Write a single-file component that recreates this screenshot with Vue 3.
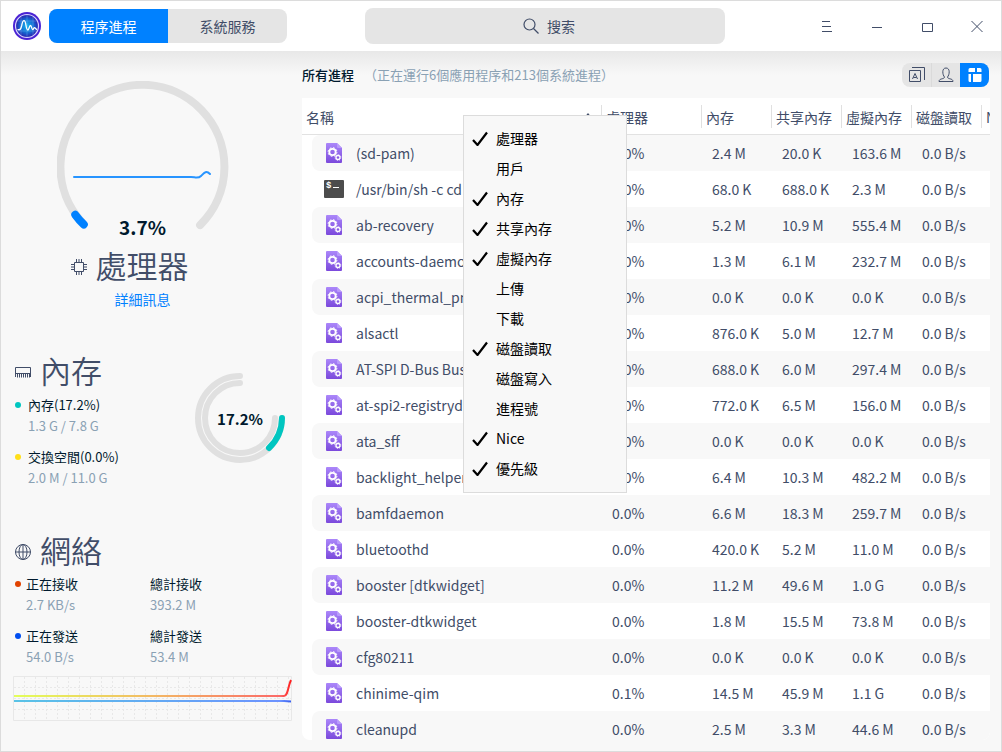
<script setup>
const rows = [
  ['(sd-pam)', '0.0%', '2.4 M', '20.0 K', '163.6 M'],
  ['/usr/bin/sh -c cd', '0.0%', '68.0 K', '688.0 K', '2.3 M'],
  ['ab-recovery', '0.0%', '5.2 M', '10.9 M', '555.4 M'],
  ['accounts-daemon', '0.0%', '1.3 M', '6.1 M', '232.7 M'],
  ['acpi_thermal_pm', '0.0%', '0.0 K', '0.0 K', '0.0 K'],
  ['alsactl', '0.0%', '876.0 K', '5.0 M', '12.7 M'],
  ['AT-SPI D-Bus Bus', '0.0%', '688.0 K', '6.0 M', '297.4 M'],
  ['at-spi2-registryd', '0.0%', '772.0 K', '6.5 M', '156.0 M'],
  ['ata_sff', '0.0%', '0.0 K', '0.0 K', '0.0 K'],
  ['backlight_helper', '0.0%', '6.4 M', '10.3 M', '482.2 M'],
  ['bamfdaemon', '0.0%', '6.6 M', '18.3 M', '259.7 M'],
  ['bluetoothd', '0.0%', '420.0 K', '5.2 M', '11.0 M'],
  ['booster [dtkwidget]', '0.0%', '11.2 M', '49.6 M', '1.0 G'],
  ['booster-dtkwidget', '0.0%', '1.8 M', '15.5 M', '73.8 M'],
  ['cfg80211', '0.0%', '0.0 K', '0.0 K', '0.0 K'],
  ['chinime-qim', '0.1%', '14.5 M', '45.9 M', '1.1 G'],
  ['cleanupd', '0.0%', '2.5 M', '3.3 M', '44.6 M'],
]
const heads = ['處理器', '內存', '共享內存', '虛擬內存', '磁盤讀取', 'Nice']
const menu = [
  ['處理器', true], ['用戶', false], ['內存', true], ['共享內存', true],
  ['虛擬內存', true], ['上傳', false], ['下載', false], ['磁盤讀取', true],
  ['磁盤寫入', false], ['進程號', false], ['Nice', true], ['優先級', true],
]
</script>

<template>
  <div class="window">
    <header class="titlebar">
      <svg class="logo" viewBox="0 0 28 28" aria-hidden="true">
        <defs>
          <radialGradient id="lg"><stop offset="0" stop-color="#13b8ee" /><stop offset="0.6" stop-color="#1668d0" /><stop offset="1" stop-color="#2a1eac" /></radialGradient>
        </defs>
        <circle cx="14" cy="14" r="14" fill="#4a22d4" />
        <circle cx="14" cy="14" r="11.5" fill="url(#lg)" stroke="#d9d2ff" stroke-width="1.200" />
        <path d="M8 5v18M14 3v22M20 5v18M4 9h20M4 19h20" stroke="#8cc8ff" stroke-width=".5" opacity=".6" />
        <path d="M4.500 17.500c3 1 3.500-1 4.200-4 .6-3 1.200-4.800 2.300-4.800s1.600 2.300 2 4.800c.5 3 1 4.500 2 4.500s1.200-4.500 2.500-4.500 1 4 2.200 4 .8-1.800 1.800-1.800 1 1.800 2.500 1.800" fill="none" stroke="#fff" stroke-width="1.300" />
      </svg>
      <nav class="tabs">
        <button class="tab active">程序進程</button>
        <button class="tab">系統服務</button>
      </nav>
      <div class="searchzone">
        <label class="search">
          <svg width="16" height="16" viewBox="0 0 16 16" aria-hidden="true"><circle cx="6.500" cy="6.500" r="5.500" /><path d="M10.500 10.500l5 5" /></svg>
          <input type="text" placeholder="搜索" aria-label="搜索">
        </label>
      </div>
      <div class="winbtns">
        <button aria-label="選單"><svg viewBox="0 0 12 12"><path d="M1 1.500h8M1 6.500h9M1 11.500h10" /></svg></button>
        <button aria-label="最小化"><svg viewBox="0 0 12 12"><path d="M1 7.500h10" /></svg></button>
        <button aria-label="最大化"><svg viewBox="0 0 12 12"><path d="M1.500 3.500h10v8h-10z" /></svg></button>
        <button aria-label="關閉"><svg viewBox="0 0 12 12"><path d="M.5 1l11 11M11.500 1l-11 11" /></svg></button>
      </div>
    </header>

    <div class="body">
      <aside>
        <section class="cpu">
          <div class="gauge">
            <svg viewBox="0 0 172 150" aria-hidden="true">
              <path d="M24.900 141.100A82 82 0 1 1 143.100 144.100" class="track" />
              <path d="M18.300 133.800q4 5.500 8.500 9.700" class="value" />
              <path d="M17 96h117c4 0 7 2 10-1s5-6 9-2" class="spark" />
            </svg>
            <b>3.7%</b>
          </div>
          <h2><svg width="16" height="16" viewBox="0 0 16 16" aria-hidden="true"><path d="M3.500 3.500h9v9h-9zM5.500 0v3M8 0v3M10.500 0v3M5.500 13v3M8 13v3M10.500 13v3M0 5.500h3M0 8h3M0 10.500h3M13 5.500h3M13 8h3M13 10.500h3" /></svg>處理器</h2>
          <a href="#">詳細訊息</a>
        </section>

        <section class="mem">
          <div>
            <h2><svg width="16" height="16" viewBox="0 0 16 16" aria-hidden="true"><path d="M.5 13V3.500h15V13M1 9.500h14M2.500 10v3.500M4.500 10v3.500M6.500 10v3.500M8.500 10v3.500M10.500 10v3.500M12.500 10v3.500M14.500 10v3.500" /></svg>內存</h2>
            <dl>
              <dt class="teal">內存(17.2%)</dt><dd>1.3 G / 7.8 G</dd>
              <dt class="yellow">交換空間(0.0%)</dt><dd>2.0 M / 11.0 G</dd>
            </dl>
          </div>
          <div class="ring">
            <svg viewBox="0 0 90 90" aria-hidden="true">
              <path d="M45 3A42 42 0 1 0 87 45" />
              <path d="M45 10A35 35 0 1 0 80 45" />
              <path d="M87 45A42 42 0 0 1 74 75" class="used" />
            </svg>
            <b>17.2%</b>
          </div>
        </section>

        <section class="net">
          <h2><svg width="16" height="16" viewBox="0 0 16 16" aria-hidden="true"><circle cx="8" cy="8" r="7.500" /><ellipse cx="8" cy="8" rx="4" ry="7.500" /><path d="M8 .5v15M.5 8h15" /></svg>網絡</h2>
          <div class="netgrid">
            <dl>
              <dt class="red">正在接收</dt><dd>2.7 KB/s</dd>
              <dt class="blue">正在發送</dt><dd>54.0 B/s</dd>
            </dl>
            <dl>
              <dt>總計接收</dt><dd>393.2 M</dd>
              <dt>總計發送</dt><dd>53.4 M</dd>
            </dl>
          </div>
          <svg class="chart" viewBox="0 0 279 45" aria-hidden="true">
            <defs>
              <linearGradient id="rx" gradientUnits="userSpaceOnUse" x1="0" x2="279" y1="0" y2="0"><stop offset="0" stop-color="#e3ff5a" /><stop offset=".5" stop-color="#f3b964" /><stop offset=".96" stop-color="#fb6a68" /><stop offset="1" stop-color="#ff1515" /></linearGradient>
              <linearGradient id="tx" gradientUnits="userSpaceOnUse" x1="0" x2="279" y1="0" y2="0"><stop offset="0" stop-color="#59c3e6" /><stop offset=".96" stop-color="#6c92ff" /><stop offset="1" stop-color="#3058ee" /></linearGradient>
            </defs>
            <path d="M11.500 1v43M22.500 1v43M33.500 1v43M44.500 1v43M55.500 1v43M66.500 1v43M77.500 1v43M88.500 1v43M99.500 1v43M110.500 1v43M121.500 1v43M132.500 1v43M143.500 1v43M154.500 1v43M165.500 1v43M176.500 1v43M187.500 1v43M198.500 1v43M209.500 1v43M220.500 1v43M231.500 1v43M242.500 1v43M253.500 1v43M264.500 1v43M275.500 1v43M1 11.500h277M1 22.500h277M1 33.500h277" stroke="#e8e8e8" stroke-dasharray="2 2" fill="none" />
            <path d="M.5.5h278v44H.5z" fill="none" stroke="#e8e8e8" />
            <path d="M1 20h270c4 0 4-10 7-16" fill="none" stroke="url(#rx)" stroke-width="2" />
            <path d="M1 25h270l7 .5" fill="none" stroke="url(#tx)" stroke-width="2" />
          </svg>
        </section>
      </aside>

      <main>
        <div class="summary">
          <strong>所有進程</strong>
          <span>（正在運行6個應用程序和213個系統進程）</span>
          <div class="modes">
            <button aria-label="應用程序"><svg viewBox="0 0 16 16"><path d="M.5 3.500h11v11H.5zM3 .5h12.500V13" /><path d="M3.500 12L6 6.500 8.500 12M4.500 10.500h3" /></svg></button>
            <button aria-label="我的進程"><svg viewBox="0 0 16 16"><path d="M1 14.500c0-3.500 5.500-2 5.500-4.500C4.500 8 3.500 1 8 1s3.500 7 1.500 9c0 2.500 5.500 1 5.500 4.500z" /></svg></button>
            <button class="active" aria-label="所有進程"><svg viewBox="0 0 16 16"><path class="solid" d="M3 1h5v4H1.500V2.500A1.500 1.500 0 0 1 3 1zM10 1h3a1.500 1.500 0 0 1 1.500 1.500V5H10zM1.500 7H4v8H3a1.500 1.500 0 0 1-1.500-1.500zM6 7h8.500v6.500A1.500 1.500 0 0 1 13 15H6z" /></svg></button>
          </div>
        </div>
        <div class="tablewrap">
          <div class="scroller">
            <table>
              <colgroup><col class="c-name"><col class="c-cpu"><col v-for="n in 4" :key="n" class="c-num"><col class="c-num"></colgroup>
              <thead>
                <tr>
                  <th class="first">名稱<svg width="8" height="5" viewBox="0 0 8 5" aria-hidden="true"><path d="M0 5l4-5 4 5z" /></svg></th>
                  <th v-for="h in heads" :key="h">{{ h }}</th>
                </tr>
              </thead>
              <tbody>
                <tr v-for="(r, i) in rows" :key="r[0]">
                  <td class="name">
                    <div>
                      <svg v-if="i === 1" class="picon" viewBox="0 0 20 20" aria-hidden="true"><rect y="1" width="20" height="18" rx="1" fill="#4c4c4c" /><text x="2" y="9" fill="#fff" font-size="9" font-weight="bold" font-family="Liberation Mono, monospace">$</text><path d="M9 8.500h6" stroke="#fff" stroke-width="1.200" /></svg>
                      <svg v-else class="picon" viewBox="0 0 20 20" aria-hidden="true">
                        <defs><linearGradient id="pg" x2="0" y2="1"><stop offset="0" stop-color="#ab87fa" /><stop offset="1" stop-color="#7b49dc" /></linearGradient></defs>
                        <path d="M3 0h10l5 5v14a1 1 0 0 1-1 1H3a1 1 0 0 1-1-1V1a1 1 0 0 1 1-1z" fill="url(#pg)" /><path d="M13 0v4a1 1 0 0 0 1 1h4z" fill="#b99bfb" />
                        <g fill="none" stroke="#fff"><circle cx="8.500" cy="9" r="3.200" stroke-width="1.800" /><circle cx="8.500" cy="9" r="4.400" stroke-width="1" stroke-dasharray="1.700 1.750" /><circle cx="14" cy="14.500" r="2" stroke-width="1.300" /><circle cx="14" cy="14.500" r="2.900" stroke-width=".8" stroke-dasharray="1.100 1.180" /></g>
                      </svg>
                      {{ r[0] }}
                    </div>
                  </td>
                  <td v-for="c in 4" :key="c">{{ r[c] }}</td>
                  <td>0.0 B/s</td>
                  <td></td>
                </tr>
              </tbody>
            </table>
          </div>
          <div class="menu" role="menu">
            <button v-for="m in menu" :key="m[0]" role="menuitemcheckbox" :aria-checked="m[1]">
              <svg width="16" height="16" viewBox="0 0 16 16" aria-hidden="true"><path v-if="m[1]" d="M1 10l4.500 5L15 2.500" /></svg>{{ m[0] }}
            </button>
          </div>
        </div>
      </main>
    </div>
  </div>
</template>

<style>
body { background: #f8f8f8; }
</style>

<style scoped>
* { box-sizing: border-box; }
.window { height: 100vh; display: flex; flex-direction: column; border: 1px solid #dcdcdc; background: #f8f8f8; font: 14px/20px "Noto Sans CJK SC", "Noto Sans CJK TC", sans-serif; color: #414d68; overflow: hidden; }
button { font: inherit; color: inherit; border: 0; padding: 0; background: none; }
h2, dl, dd { margin: 0; }
svg { display: block; flex: none; }
.titlebar { flex: none; height: 50px; display: flex; align-items: center; padding-left: 12px; background: #fff; }
.logo { width: 28px; height: 28px; margin-right: 8px; }
.tabs { display: flex; width: 238px; height: 34px; border-radius: 8px; overflow: hidden; background: #e5e5e5; }
.tab { flex: 1; }
.tab.active { background: #0081ff; color: #fff; }
.searchzone { flex: 1; display: flex; justify-content: center; padding-left: 1px; }
.search { width: 360px; height: 36px; display: flex; align-items: center; justify-content: center; gap: 8px; padding-left: 8px; background: #e5e5e5; border-radius: 8px; }
.search svg { fill: none; stroke: #414d68; stroke-width: 1.2; }
.search input { width: 28px; border: 0; padding: 0; background: none; font: inherit; outline: 0; }
.search input::placeholder { color: #414d68; opacity: 1; }
.winbtns { display: flex; margin-right: -1px; }
.winbtns button { width: 50px; height: 50px; display: grid; place-items: center; }
.winbtns svg { width: 12px; height: 12px; fill: none; stroke: #414d68; stroke-width: 1; overflow: visible; }
.body { flex: 1; min-height: 0; display: flex; background: linear-gradient(#e8e8e8, #f8f8f8 24px); }
aside { flex: none; width: 301px; padding: 30px 10px 0 12px; }
h2 { display: flex; align-items: center; gap: 9px; font-size: 31px; line-height: 40px; font-weight: 350; }
h2 svg { margin-top: 4px; fill: none; stroke: #414d68; stroke-width: 1; }
.cpu { display: flex; flex-direction: column; align-items: center; padding-right: 20px; }
.cpu h2 { margin-right: 26px; }
.gauge { width: 172px; height: 164px; position: relative; }
.gauge path { fill: none; stroke-linecap: round; }
.track { stroke: #e0e0e0; stroke-width: 8; }
.value { stroke: #0081ff; stroke-width: 8; }
.gauge .spark { stroke: #2794ff; stroke-width: 2; }
.gauge b { position: absolute; left: 0; right: 0; top: 132px; text-align: center; font-size: 19px; line-height: 28px; color: #001a2e; }
.cpu a { color: #0081ff; text-decoration: none; margin-top: 4px; }
.mem { display: flex; justify-content: space-between; margin-top: 41px; }
.mem h2, .net h2 { padding-left: 2px; }
dl { font-size: 13px; }
dt { height: 20px; position: relative; color: #001a2e; }
dd { height: 20px; margin: 1px 0 11px; color: #8aa1b4; }
.mem dl { padding: 5px 0 0 15px; }
.teal::before, .yellow::before, .red::before, .blue::before { content: ""; position: absolute; left: -13px; top: 7px; width: 6px; height: 6px; border-radius: 50%; background: #00c6c0; }
.yellow::before { background: #ffdf19; }
.net .red::before, .net .blue::before { left: -11px; }
.red::before { background: #e14300; }
.blue::before { background: #004ef0; }
.ring { width: 90px; height: 90px; margin: 23px 7px 0 0; position: relative; }
.ring path { fill: none; stroke: #e0e0e0; stroke-width: 6; stroke-linecap: round; }
.ring .used { stroke: #00c6c0; }
.ring b { position: absolute; inset: 35px 0 auto; text-align: center; font-size: 15px; line-height: 22px; color: #001a2e; }
.net { margin-top: 31px; }
.netgrid { display: grid; grid-template-columns: 124px 1fr; padding: 4px 0 0 13px; }
.chart { width: 100%; margin-top: -2px; }
main { flex: 1; min-width: 0; display: flex; flex-direction: column; padding: 12px 11px 11px 0; }
.summary { display: flex; align-items: center; height: 24px; flex: none; font-size: 13px; }
.summary strong { font-weight: 500; color: #001a2e; }
.summary span { margin-left: 10px; color: #8aa1b4; }
.modes { display: flex; margin: 0 1px 0 auto; border-radius: 8px; overflow: hidden; background: #e5e5e5; }
.modes button { width: 29px; height: 24px; display: grid; place-items: center; }
.modes button + button { border-left: 1px solid #dadada; }
.modes svg { width: 16px; height: 16px; fill: none; stroke: #414d68; }
.modes .active { background: #0081ff; border-color: #0081ff; }
.modes .solid { fill: #fff; stroke: none; }
.tablewrap { position: relative; flex: 1; min-height: 0; margin-top: 11px; }
.scroller { height: 100%; overflow: hidden; background: #fff; border-radius: 0 0 8px 8px; }
table { width: 749px; border-spacing: 0; table-layout: fixed; }
.c-name { width: 299px; }
.c-cpu { width: 100px; }
.c-num { width: 70px; }
th { height: 37px; padding: 2px 0 0 5px; text-align: left; font-weight: 400; border-bottom: 1px solid #e2e2e2; white-space: nowrap; }
th:not(.first) { background: linear-gradient(#e0e0e0, #e0e0e0) 0 7px / 1px 23px no-repeat; }
th.first { position: relative; padding-left: 4px; }
.first svg { position: absolute; right: 9px; top: 15px; fill: #414d68; }
td { height: 36px; padding: 0 0 0 11px; white-space: nowrap; }
td.name { padding: 0 0 0 10px; }
.name div { height: 36px; display: flex; align-items: center; gap: 12px; padding-left: 12px; border-radius: 8px 0 0 8px; }
tbody tr:nth-child(odd) td:not(.name), tbody tr:nth-child(odd) .name div { background: #f8f8f8; }
.picon { width: 20px; height: 20px; }
.menu { position: absolute; left: 161px; top: 17px; width: 164px; padding: 7px 0 9px; border: 1px solid #dcdcdc; background: #f8f8f8; color: #000; }
.menu button { display: flex; align-items: center; gap: 8px; width: 100%; height: 30px; padding-left: 8px; }
.menu svg { fill: none; stroke: #000; stroke-width: 2.2; }
</style>
